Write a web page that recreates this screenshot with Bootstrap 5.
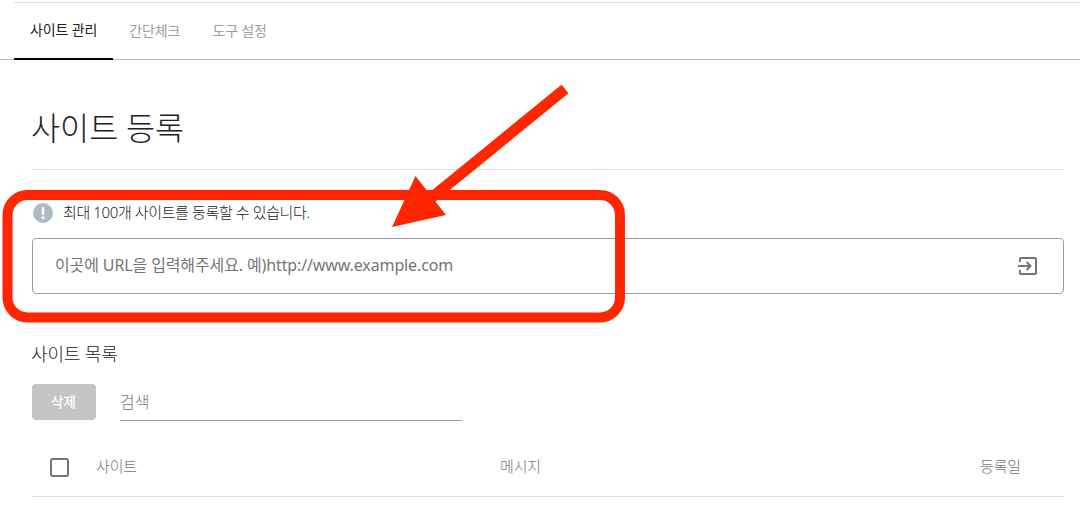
<!DOCTYPE html>
<html lang="ko">
<head>
<meta charset="utf-8">
<title>사이트 등록</title>
<link href="https://cdn.jsdelivr.net/npm/bootstrap@5.3.0/dist/css/bootstrap.min.css" rel="stylesheet">
<style>
html,body{height:510px;overflow:hidden;background:#fff}
body{position:relative;font-family:Roboto,"Noto Sans CJK KR",sans-serif;font-weight:300;color:#212121}
.top-rule{height:1px;margin:2px 0 0 14px;background:#e0e0e0}
.tab-bar{height:57px;border-bottom:1px solid #bdbdbd;padding-left:14px}
.tab-item{height:57px;padding:0 16px;display:flex;align-items:center;font-size:14px;font-weight:400;letter-spacing:-.1px;color:#9e9e9e}
.tab-item.is-on{color:#212121;border-bottom:2px solid #000;margin-bottom:-1px}
.page-body{padding:0 16px 0 32px}
.page-title{font-size:31.6px;font-weight:300;line-height:50px;margin:45px 0 0;padding:0 0 14px;text-indent:-1px;border-bottom:1px solid #e0e0e0;color:#212121}
.notice-row{margin-top:32px;height:22px;font-family:"Noto Sans","Noto Sans CJK KR",sans-serif;font-size:15px;color:#212121;gap:10px;letter-spacing:-.38px;padding-left:1px}
.notice-row span{margin-top:-2px}
.url-box{margin-top:14px;height:56px;border:1px solid #9e9e9e;border-radius:4px;padding:0 26px 2px 22px}
.url-field{border:0;outline:0;flex:1;padding:0;font-family:"Noto Sans","Noto Sans CJK KR",sans-serif;font-size:16px;font-weight:400;letter-spacing:-.12px;color:#212121}
.url-field::placeholder{color:#757575;opacity:1}
.url-go{margin-top:2px}
.list-title{font-size:18px;font-weight:300;line-height:26px;margin:48px 0 0;letter-spacing:-.1px;text-indent:-1px;color:#212121}
.tool-row{margin-top:16px;gap:24px}
.del-btn{width:64px;height:36px;padding:0 1px 0 0;border:0;border-radius:4px;background:#c4c4c4;color:#fff;font-size:13.5px;font-weight:500}
.del-btn:disabled{background:#c4c4c4;color:#fff;opacity:1}
.search-field{width:342px;height:37px;border:0;border-bottom:1px solid #9e9e9e;outline:0;padding:0;font-size:16px;font-weight:300;color:#212121;font-family:Roboto,"Noto Sans CJK KR",sans-serif}
.search-field::placeholder{color:#757575;opacity:1}
.head-row{height:76px;border-bottom:1px solid #e0e0e0;font-size:15px;letter-spacing:-.15px;color:#757575;padding-top:17px}
.chk{width:19px;height:19px;border:2px solid #757575;border-radius:3px;margin-left:18px;flex:none}
.col-site{width:431px;padding-left:27px}
.col-msg{flex:1}
.col-date{width:84px}
.mark-up{position:absolute;left:0;top:0;pointer-events:none}
</style>
</head>
<body>
<div class="top-rule"></div>
<nav class="tab-bar d-flex">
  <a class="tab-item is-on text-decoration-none">사이트 관리</a>
  <a class="tab-item text-decoration-none">간단체크</a>
  <a class="tab-item text-decoration-none">도구 설정</a>
</nav>
<main class="page-body">
  <h1 class="page-title">사이트 등록</h1>
  <div class="notice-row d-flex align-items-center">
    <svg width="20" height="20" viewBox="0 0 20 20"><circle cx="10" cy="10" r="10" fill="#aebbc3"/><rect x="8.700" y="4" width="2.600" height="8" rx="1" fill="#fff"/><circle cx="10" cy="14.800" r="1.500" fill="#fff"/></svg>
    <span>최대 100개 사이트를 등록할 수 있습니다.</span>
  </div>
  <div class="url-box d-flex align-items-center">
    <input class="url-field" type="text" placeholder="이곳에 URL을 입력해주세요. 예)http://www.example.com">
    <svg class="url-go" width="19" height="18" viewBox="0 0 19 18" fill="none" stroke="#757575" stroke-width="2"><path d="M2 5V2a1 1 0 0 1 1-1h14a1 1 0 0 1 1 1v14a1 1 0 0 1-1 1H3a1 1 0 0 1-1-1v-3"/><path d="M0 9h12M8.500 5l4 4-4 4"/></svg>
  </div>
  <h2 class="list-title">사이트 목록</h2>
  <div class="tool-row d-flex align-items-start">
    <button class="del-btn btn" disabled>삭제</button>
    <input class="search-field" type="text" placeholder="검색">
  </div>
  <div class="head-row d-flex align-items-center">
    <span class="chk"></span>
    <span class="col-site">사이트</span>
    <span class="col-msg">메시지</span>
    <span class="col-date">등록일</span>
  </div>
</main>
<svg class="mark-up" width="1080" height="510" viewBox="0 0 1080 510" fill="none">
  <rect x="7.500" y="195" width="612.500" height="122.500" rx="20" stroke="#ff2600" stroke-width="10"/>
  <path d="M565 89 L430 199" stroke="#ff2600" stroke-width="11"/>
  <path d="M392 227 L415.500 176 L446 215 Z" fill="#ff2600"/>
</svg>
<script src="https://cdn.jsdelivr.net/npm/bootstrap@5.3.0/dist/js/bootstrap.bundle.min.js"></script>
</body>
</html>
